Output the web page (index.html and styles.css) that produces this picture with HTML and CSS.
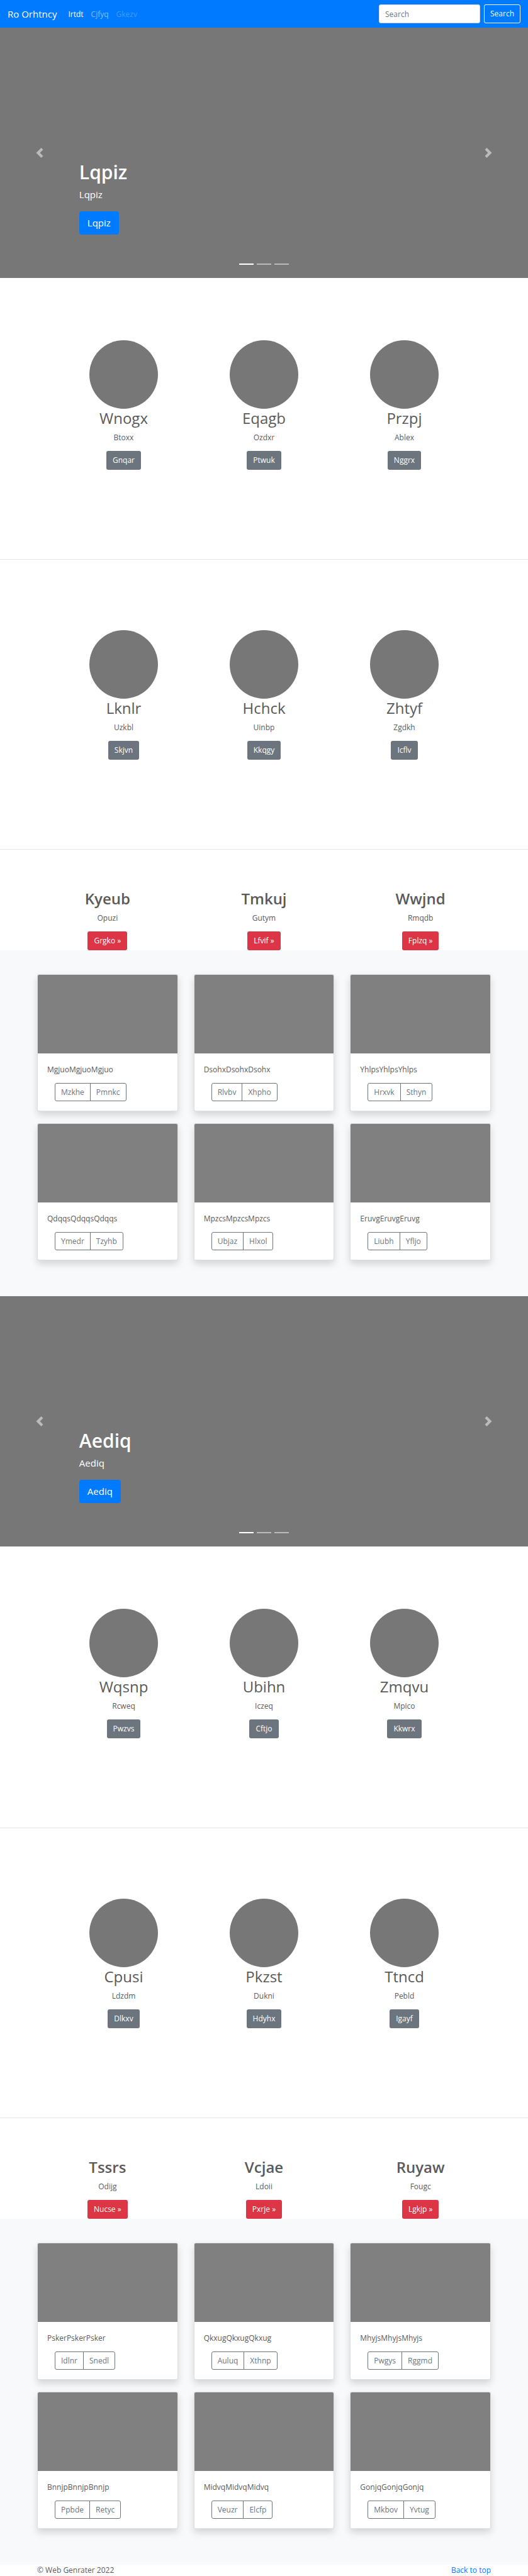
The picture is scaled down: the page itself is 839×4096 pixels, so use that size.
FILE: index.html
```html
<!DOCTYPE html>
<html lang="en">
<head>
<meta charset="utf-8">
<meta name="viewport" content="width=device-width, initial-scale=1">
<title>Ro Orhtncy</title>
<link rel="stylesheet" href="styles.css">
</head>
<body id="top">
<header class="navbar">
  <a class="brand" href="#">Ro Orhtncy</a>
  <nav class="nav">
    <a class="nav-link active" href="#">Irtdt</a>
    <a class="nav-link" href="#">Cjfyq</a>
    <a class="nav-link disabled" href="#">Gkezv</a>
  </nav>
  <form class="search">
    <input class="search-input" type="search" placeholder="Search" aria-label="Search">
    <button class="btn btn-outline-light" type="button">Search</button>
  </form>
</header>
<main>
  <section class="carousel">
    <button class="arrow" type="button" aria-label="Previous"><svg viewBox="0 0 8 8"><path d="M5.25 0l-4 4 4 4 1.5-1.5L4.25 4l2.5-2.5L5.25 0z"/></svg></button>
    <div class="caption">
      <h1>Lqpiz</h1>
      <p>Lqpiz</p>
      <a class="btn btn-primary" href="#">Lqpiz</a>
    </div>
    <button class="arrow" type="button" aria-label="Next"><svg viewBox="0 0 8 8"><path d="M2.75 0l-1.5 1.5L3.75 4l-2.5 2.5L2.75 8l4-4-4-4z"/></svg></button>
    <div class="indicators"><span class="dash on"></span><span class="dash"></span><span class="dash"></span></div>
  </section>
  <section class="profiles">
    <div class="profile"><div class="circle"></div><h2>Wnogx</h2><p>Btoxx</p><a class="btn btn-secondary" href="#">Gnqar</a></div>
    <div class="profile"><div class="circle"></div><h2>Eqagb</h2><p>Ozdxr</p><a class="btn btn-secondary" href="#">Ptwuk</a></div>
    <div class="profile"><div class="circle"></div><h2>Przpj</h2><p>Ablex</p><a class="btn btn-secondary" href="#">Nggrx</a></div>
  </section>
  <hr>
  <section class="profiles">
    <div class="profile"><div class="circle"></div><h2>Lknlr</h2><p>Uzkbl</p><a class="btn btn-secondary" href="#">Skjvn</a></div>
    <div class="profile"><div class="circle"></div><h2>Hchck</h2><p>Uinbp</p><a class="btn btn-secondary" href="#">Kkqgy</a></div>
    <div class="profile"><div class="circle"></div><h2>Zhtyf</h2><p>Zgdkh</p><a class="btn btn-secondary" href="#">Icflv</a></div>
  </section>
  <hr>
  <section class="topics container">
    <div class="topic"><h2>Kyeub</h2><p>Opuzi</p><a class="btn btn-danger" href="#">Grgko »</a></div>
    <div class="topic"><h2>Tmkuj</h2><p>Gutym</p><a class="btn btn-danger" href="#">Lfvif »</a></div>
    <div class="topic"><h2>Wwjnd</h2><p>Rmqdb</p><a class="btn btn-danger" href="#">Fplzq »</a></div>
  </section>
  <section class="album">
    <div class="cards container">
      <article class="card"><div class="thumb"></div><div class="card-body"><p>MgjuoMgjuoMgjuo</p><div class="group"><button class="btn" type="button">Mzkhe</button><button class="btn" type="button">Pmnkc</button></div></div></article>
      <article class="card"><div class="thumb"></div><div class="card-body"><p>DsohxDsohxDsohx</p><div class="group"><button class="btn" type="button">Rlvbv</button><button class="btn" type="button">Xhpho</button></div></div></article>
      <article class="card"><div class="thumb"></div><div class="card-body"><p>YhlpsYhlpsYhlps</p><div class="group"><button class="btn" type="button">Hrxvk</button><button class="btn" type="button">Sthyn</button></div></div></article>
      <article class="card"><div class="thumb"></div><div class="card-body"><p>QdqqsQdqqsQdqqs</p><div class="group"><button class="btn" type="button">Ymedr</button><button class="btn" type="button">Tzyhb</button></div></div></article>
      <article class="card"><div class="thumb"></div><div class="card-body"><p>MpzcsMpzcsMpzcs</p><div class="group"><button class="btn" type="button">Ubjaz</button><button class="btn" type="button">Hlxol</button></div></div></article>
      <article class="card"><div class="thumb"></div><div class="card-body"><p>EruvgEruvgEruvg</p><div class="group"><button class="btn" type="button">Liubh</button><button class="btn" type="button">Yfljo</button></div></div></article>
    </div>
  </section>
  <section class="carousel">
    <button class="arrow" type="button" aria-label="Previous"><svg viewBox="0 0 8 8"><path d="M5.25 0l-4 4 4 4 1.5-1.5L4.25 4l2.5-2.5L5.25 0z"/></svg></button>
    <div class="caption">
      <h1>Aediq</h1>
      <p>Aediq</p>
      <a class="btn btn-primary" href="#">Aediq</a>
    </div>
    <button class="arrow" type="button" aria-label="Next"><svg viewBox="0 0 8 8"><path d="M2.75 0l-1.5 1.5L3.75 4l-2.5 2.5L2.75 8l4-4-4-4z"/></svg></button>
    <div class="indicators"><span class="dash on"></span><span class="dash"></span><span class="dash"></span></div>
  </section>
  <section class="profiles">
    <div class="profile"><div class="circle"></div><h2>Wqsnp</h2><p>Rcweq</p><a class="btn btn-secondary" href="#">Pwzvs</a></div>
    <div class="profile"><div class="circle"></div><h2>Ubihn</h2><p>Iczeq</p><a class="btn btn-secondary" href="#">Cftjo</a></div>
    <div class="profile"><div class="circle"></div><h2>Zmqvu</h2><p>Mpico</p><a class="btn btn-secondary" href="#">Kkwrx</a></div>
  </section>
  <hr>
  <section class="profiles">
    <div class="profile"><div class="circle"></div><h2>Cpusi</h2><p>Ldzdm</p><a class="btn btn-secondary" href="#">Dlkxv</a></div>
    <div class="profile"><div class="circle"></div><h2>Pkzst</h2><p>Dukni</p><a class="btn btn-secondary" href="#">Hdyhx</a></div>
    <div class="profile"><div class="circle"></div><h2>Ttncd</h2><p>Pebld</p><a class="btn btn-secondary" href="#">Igayf</a></div>
  </section>
  <hr>
  <section class="topics container">
    <div class="topic"><h2>Tssrs</h2><p>Odijg</p><a class="btn btn-danger" href="#">Nucse »</a></div>
    <div class="topic"><h2>Vcjae</h2><p>Ldoii</p><a class="btn btn-danger" href="#">Pxrje »</a></div>
    <div class="topic"><h2>Ruyaw</h2><p>Fougc</p><a class="btn btn-danger" href="#">Lgkjp »</a></div>
  </section>
  <section class="album">
    <div class="cards container">
      <article class="card"><div class="thumb"></div><div class="card-body"><p>PskerPskerPsker</p><div class="group"><button class="btn" type="button">Idlnr</button><button class="btn" type="button">Snedl</button></div></div></article>
      <article class="card"><div class="thumb"></div><div class="card-body"><p>QkxugQkxugQkxug</p><div class="group"><button class="btn" type="button">Auluq</button><button class="btn" type="button">Xthnp</button></div></div></article>
      <article class="card"><div class="thumb"></div><div class="card-body"><p>MhyjsMhyjsMhyjs</p><div class="group"><button class="btn" type="button">Pwgys</button><button class="btn" type="button">Rggmd</button></div></div></article>
      <article class="card"><div class="thumb"></div><div class="card-body"><p>BnnjpBnnjpBnnjp</p><div class="group"><button class="btn" type="button">Ppbde</button><button class="btn" type="button">Retyc</button></div></div></article>
      <article class="card"><div class="thumb"></div><div class="card-body"><p>MidvqMidvqMidvq</p><div class="group"><button class="btn" type="button">Veuzr</button><button class="btn" type="button">Elcfp</button></div></div></article>
      <article class="card"><div class="thumb"></div><div class="card-body"><p>GonjqGonjqGonjq</p><div class="group"><button class="btn" type="button">Mkbov</button><button class="btn" type="button">Yvtug</button></div></div></article>
    </div>
  </section>
</main>
<footer class="footer container">
  <span>© Web Genrater 2022</span>
  <a href="#top">Back to top</a>
</footer>
</body>
</html>
```
FILE: styles.css
```css
* { box-sizing: border-box; }

body {
  margin: 0;
  background: #fff;
  color: #5a5a5a;
  font-family: "Open Sans", "Noto Sans", sans-serif;
  font-size: 12px;
  line-height: 19px;
}

h1, h2, p { margin: 0; }
a { color: #007bff; text-decoration: none; }

.container {
  width: 100%;
  max-width: 745px;
  margin: 0 auto;
  padding: 0 12px;
}

/* Buttons */
.btn {
  display: inline-block;
  height: 30px;
  padding: 0 9px;
  border: 1px solid transparent;
  border-radius: 3px;
  background: transparent;
  color: #fff;
  font: inherit;
  line-height: 28px;
  text-align: center;
  cursor: pointer;
}
.btn-outline-light { border-color: #f8f9fa; color: #f8f9fa; }
.btn-primary {
  height: 37px;
  padding: 0 12px;
  border-radius: 4px;
  background: #007bff;
  font-size: 15px;
  line-height: 35px;
}
.btn-secondary { background: #6c757d; }
.btn-danger { background: #dc3545; }

/* Top bar */
.navbar {
  display: flex;
  align-items: center;
  padding: 7px 12px;
  background: #007bff;
}
.brand { margin-right: 12px; color: #fff; font-size: 15px; }
.nav { display: flex; flex: 1; }
.nav-link { padding: 0 6px; color: rgba(255, 255, 255, .5); }
.nav-link.active { color: #fff; }
.nav-link.disabled { color: rgba(255, 255, 255, .25); }
.search { display: flex; gap: 6px; }
.search-input {
  width: 161px;
  height: 30px;
  padding: 0 9px;
  border: 1px solid #ced4da;
  border-radius: 3px;
  background: #fff;
  color: #495057;
  font: inherit;
  appearance: none;
}
.search-input::placeholder { color: #6c757d; opacity: 1; }

/* Carousel */
.carousel {
  position: relative;
  display: flex;
  min-height: 398px;
  background: #777;
  color: #fff;
}
.arrow {
  display: flex;
  align-items: center;
  justify-content: center;
  width: 15%;
  padding: 0;
  border: 0;
  background: transparent;
  opacity: .5;
  cursor: pointer;
}
.arrow svg { width: 16px; height: 16px; fill: #fff; }
.caption {
  display: flex;
  flex: 1;
  flex-direction: column;
  align-items: flex-start;
  justify-content: flex-end;
  padding-bottom: 69px;
  font-size: 15px;
  line-height: 23px;
}
.caption h1 { margin-bottom: 6px; font-size: 30px; font-weight: 600; line-height: 37px; }
.caption p { margin-bottom: 15px; }
.indicators {
  position: absolute;
  right: 0;
  bottom: 21px;
  left: 0;
  display: flex;
  justify-content: center;
  gap: 5px;
}
.dash { width: 23px; height: 2px; background: #fff; opacity: .5; }
.dash.on { opacity: 1; }

/* Round profiles */
.profiles {
  display: grid;
  grid-template-columns: repeat(3, 1fr);
  max-width: 669px;
  margin: 0 auto;
  text-align: center;
}
.carousel + .profiles { padding-top: 99px; }
.circle {
  width: 109px;
  height: 109px;
  margin: 0 auto;
  border-radius: 50%;
  background: #777;
}
.profile h2, .topic h2 { margin-bottom: 6px; font-size: 24px; font-weight: 400; line-height: 30px; }
.profile p, .topic p { margin-bottom: 12px; }

hr {
  height: 1px;
  margin: 142px 0 112px;
  border: 0;
  background: #e6e6e6;
}

/* Topics */
.topics {
  display: grid;
  grid-template-columns: repeat(3, 1fr);
  gap: 25px;
  text-align: center;
}
.topic h2 { font-weight: 600; }
hr:has(+ .topics) { margin-bottom: 63px; }

/* Cards */
.album { padding: 38px 0 57px; background: #f8f9fa; }
.cards {
  display: grid;
  grid-template-columns: repeat(3, 1fr);
  gap: 19px 25px;
}
.card {
  border: 1px solid rgba(0, 0, 0, .125);
  border-radius: 3px;
  background: #fff;
  background-clip: border-box;
  box-shadow: 0 6px 12px rgba(0, 0, 0, .15);
}
.thumb { height: 125px; border-radius: 2px 2px 0 0; background: #808080; }
.card-body { padding: 16px 15px 15px; }
.card-body p { margin-bottom: 12px; }
.group { display: flex; margin-left: 12px; }
.group .btn { height: 29px; border-color: #6c757d; color: #6c757d; line-height: 27px; }
.group .btn:first-child { border-radius: 3px 0 0 3px; }
.group .btn:last-child { margin-left: -1px; border-radius: 0 3px 3px 0; }

.footer {
  display: flex;
  justify-content: space-between;
  line-height: 18px;
}
```
